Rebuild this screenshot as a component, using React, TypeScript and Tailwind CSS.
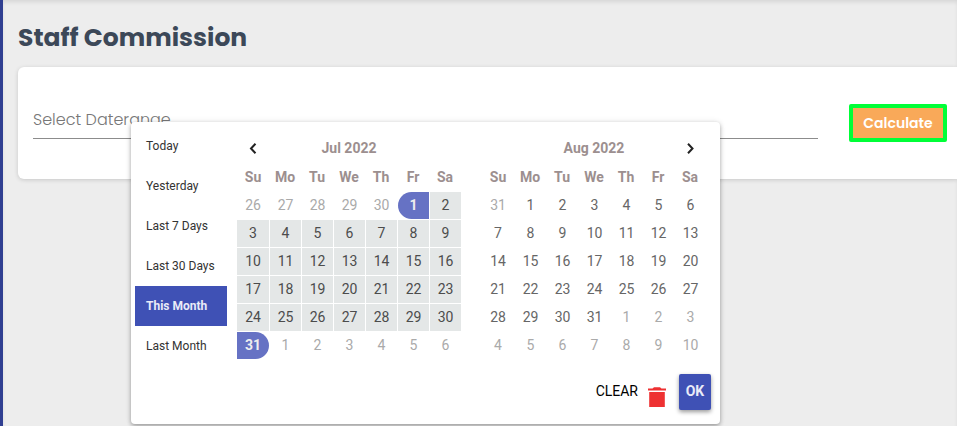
import { clsx } from "clsx";

const WEEKDAYS = ["Su", "Mo", "Tu", "We", "Th", "Fr", "Sa"];
const PRESETS = ["Today", "Yesterday", "Last 7 Days", "Last 30 Days", "This Month", "Last Month"];

type Day = { day: number; outside: boolean };
type Range = { start: number; end: number };

// Six weeks of days, with the neighbouring months' days filling both ends.
function buildWeeks(year: number, month: number): Day[][] {
  const offset = new Date(year, month, 1).getDay();
  return Array.from({ length: 6 }, (_, week) =>
    Array.from({ length: 7 }, (_, col) => {
      const date = new Date(year, month, 1 - offset + week * 7 + col);
      return { day: date.getDate(), outside: date.getMonth() !== month };
    }),
  );
}

function Calendar({ year, month, title, range, nav }: {
  year: number;
  month: number;
  title: string;
  range?: Range;
  nav: "prev" | "next";
}) {
  const arrow = (
    <button type="button" aria-label={nav === "prev" ? "Previous month" : "Next month"} className="mx-auto flex h-7 w-8 items-center justify-center">
      <svg viewBox="0 0 12 12" className="h-3 w-3" fill="none" stroke="#222" strokeWidth="2">
        <path d={nav === "prev" ? "M8.5 1.8 4 6.5l4.500 4.700" : "M4 1.800 8.500 6.500l-4.500 4.700"} />
      </svg>
    </button>
  );
  return (
    <table className="w-56 table-fixed border-collapse text-center text-sm text-[#9c8f8f]">
      <thead>
        <tr className="h-7">
          <th className="p-0">{nav === "prev" && arrow}</th>
          <th colSpan={5} className="p-0 font-bold">{title}</th>
          <th className="p-0">{nav === "next" && arrow}</th>
        </tr>
        <tr className="h-[30px]">
          {WEEKDAYS.map((name) => (
            <th key={name} scope="col" className="p-0 font-bold">{name}</th>
          ))}
        </tr>
      </thead>
      <tbody>
        {buildWeeks(year, month).map((week, row) => (
          <tr key={row}>
            {week.map(({ day, outside }, col) => {
              const isStart = !outside && day === range?.start;
              const isEnd = !outside && day === range?.end;
              const inRange = !outside && range !== undefined;
              return (
                <td key={col} className="p-0 pb-px pl-px first:pl-0">
                  <button
                    type="button"
                    className={clsx(
                      "block h-[27px] w-full pb-px",
                      outside && "text-[#aaaaaa]",
                      !outside && !inRange && "text-[#666666]",
                      inRange && !isStart && !isEnd && "bg-[#e4e7e7] text-[#4c4c4c]",
                      (isStart || isEnd) && "bg-[#6672c4] font-bold text-[#eeeeee]",
                      isStart && "rounded-l-full",
                      isEnd && "rounded-r-full",
                    )}
                  >
                    {day}
                  </button>
                </td>
              );
            })}
          </tr>
        ))}
      </tbody>
    </table>
  );
}

function DateRangePicker() {
  return (
    <div
      role="dialog"
      aria-label="Choose a date range"
      className="absolute top-[18px] left-[98px] w-[589px] rounded bg-white font-[Roboto,sans-serif] shadow-[0_2px_4px_rgba(0,0,0,0.3),0_0_6px_rgba(0,0,0,0.1)]"
    >
      <div className="flex items-start">
        <ul className="w-[106px] shrink-0 p-1 pr-[10px] text-xs text-[#333333]">
          {PRESETS.map((preset) => (
            <li key={preset}>
              <button
                type="button"
                className={clsx(
                  "h-10 w-full pl-[11px] text-left whitespace-nowrap",
                  preset === "This Month" && "bg-[#3f51b5] font-bold text-[#e9ebf8]",
                )}
              >
                {preset}
              </button>
            </li>
          ))}
        </ul>
        <div className="flex gap-[21px] pt-3">
          <Calendar year={2022} month={6} title="Jul 2022" range={{ start: 1, end: 31 }} nav="prev" />
          <Calendar year={2022} month={7} title="Aug 2022" nav="next" />
        </div>
      </div>
      <div className="flex items-center justify-end pt-1 pr-[9px] pb-[14px] text-sm">
        <button type="button" className="mr-[10px] pb-0.5 text-black">CLEAR</button>
        <button type="button" aria-label="Delete range" className="mt-[10px] mr-[13px]">
          <svg viewBox="0 0 18 20" className="h-5 w-[18px]" fill="#ee3132">
            <path d="M0 1.500h4.500L6 .2h6l1.500 1.300H18v2H0zM1.200 5h15.600v15H1.200z" />
          </svg>
        </button>
        <button type="button" className="h-9 w-8 rounded-xs bg-[#3f51b5] pb-0.5 font-bold text-[#e9ebf8] shadow-[0_2px_4px_rgba(0,0,0,0.4)]">
          OK
        </button>
      </div>
    </div>
  );
}

export default function App() {
  return (
    <div className="min-h-screen overflow-hidden border-l-3 border-[#303f91] bg-[#ededed] font-[Poppins,Inter,sans-serif] shadow-[inset_0_3px_4px_-1px_rgba(0,0,0,0.1)]">
      <main className="pt-[18px] pl-[15px]">
        <h1 className="text-[25px] leading-10 font-bold text-[#3c4858]">Staff Commission</h1>
        <section className="mt-[9px] rounded-l-md bg-white pt-[37px] pr-[10px] pb-[37px] pl-[15px] shadow-[0_1px_4px_rgba(0,0,0,0.16)]">
          <form className="flex items-start gap-[31px]" onSubmit={(event) => event.preventDefault()}>
            <div className="relative flex-1">
              <input
                type="text"
                aria-label="Select Daterange"
                placeholder="Select Daterange"
                className="block h-[35px] w-full border-b border-[#8c8c8c] bg-transparent pb-1 text-base font-light outline-none placeholder:text-[#777777]"
              />
              <DateRangePicker />
            </div>
            <button type="submit" className="h-[38px] w-[98px] rounded-xs border-4 border-[#00ff37] bg-[#f9a959] text-sm font-semibold text-white">
              Calculate
            </button>
          </form>
        </section>
      </main>
    </div>
  );
}
